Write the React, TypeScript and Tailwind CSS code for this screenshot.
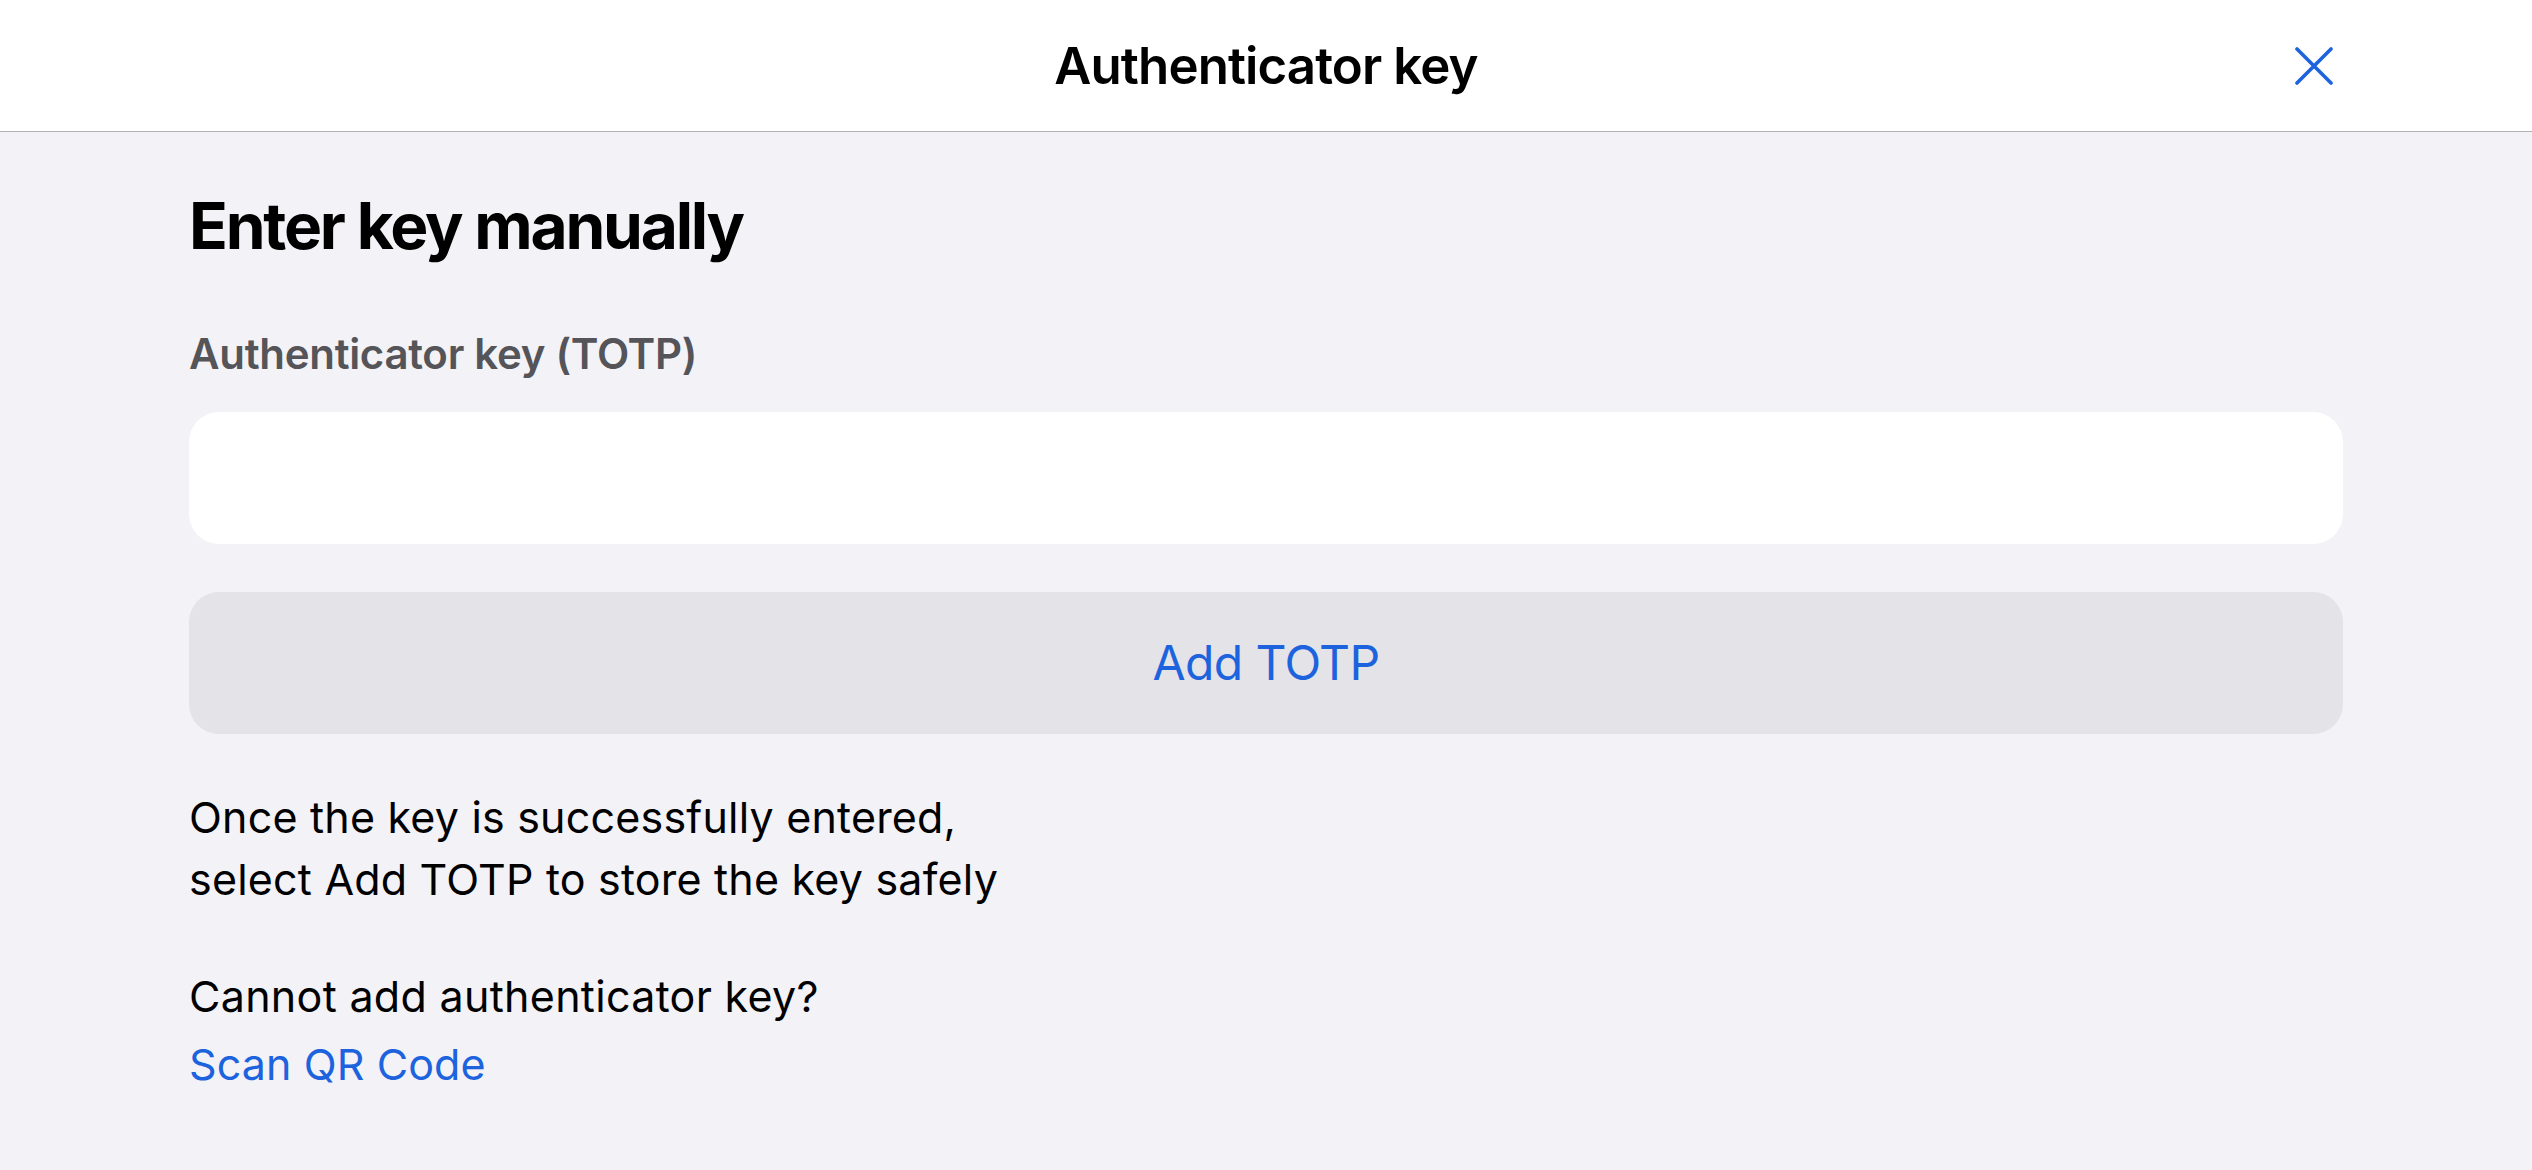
import { useState } from "react";

const CloseIcon = () => (
  <svg width="38" height="38" viewBox="0 0 38 38" fill="none">
    <path
      d="M2 2L36 36M36 2L2 36"
      stroke="#1d63dd"
      strokeWidth="3.6"
      strokeLinecap="round"
    />
  </svg>
);

const App = () => {
  const [key, setKey] = useState("");

  return (
    <div
      className="min-h-screen w-full bg-[#f2f2f7] text-black"
      style={{ fontFamily: "Inter, 'Noto Sans', sans-serif" }}
    >
      {/* nav bar */}
      <header className="grid h-[132px] grid-cols-[1fr_auto_1fr] items-center border-b border-[#b1b1b5] bg-white">
        <div />
        <h1 className="text-[51px] font-semibold leading-none tracking-[-0.9px]">
          Authenticator key
        </h1>
        <div className="flex justify-end pr-[199px]">
          <button className="flex items-center justify-center">
            <CloseIcon />
          </button>
        </div>
      </header>

      <main className="flex flex-col px-[189px] pt-[62px]">
        <h2 className="text-[64px] font-bold leading-none tracking-[-2.2px]">
          Enter key manually
        </h2>

        <label className="mt-[75px] text-[42px] font-semibold leading-none tracking-[-0.3px] text-[#545459]">
          Authenticator key (TOTP)
        </label>

        <input
          value={key}
          onChange={(e) => setKey(e.target.value)}
          className="mt-[37px] h-[132px] w-full rounded-[30px] bg-white px-10 text-[42px] outline-none"
        />

        <button className="mt-[48px] flex h-[142px] w-full items-center justify-center rounded-[30px] bg-[#e3e3e8] text-[48px] leading-none tracking-[-0.6px] text-[#1d63dd]">
          Add TOTP
        </button>

        <p className="mt-[52px] text-[43px] leading-[62px] tracking-[0.2px]">
          Once the key is successfully entered,
          <br />
          select Add TOTP to store the key safely
        </p>

        <div className="mt-[55px] flex flex-col">
          <p className="text-[43px] leading-[62px] tracking-[0.3px]">
            Cannot add authenticator key?
          </p>
          <a className="mt-[6px] text-[43px] leading-[62px] tracking-[0.1px] text-[#1d63dd]">
            Scan QR Code
          </a>
        </div>
      </main>
    </div>
  );
};

export default App;
